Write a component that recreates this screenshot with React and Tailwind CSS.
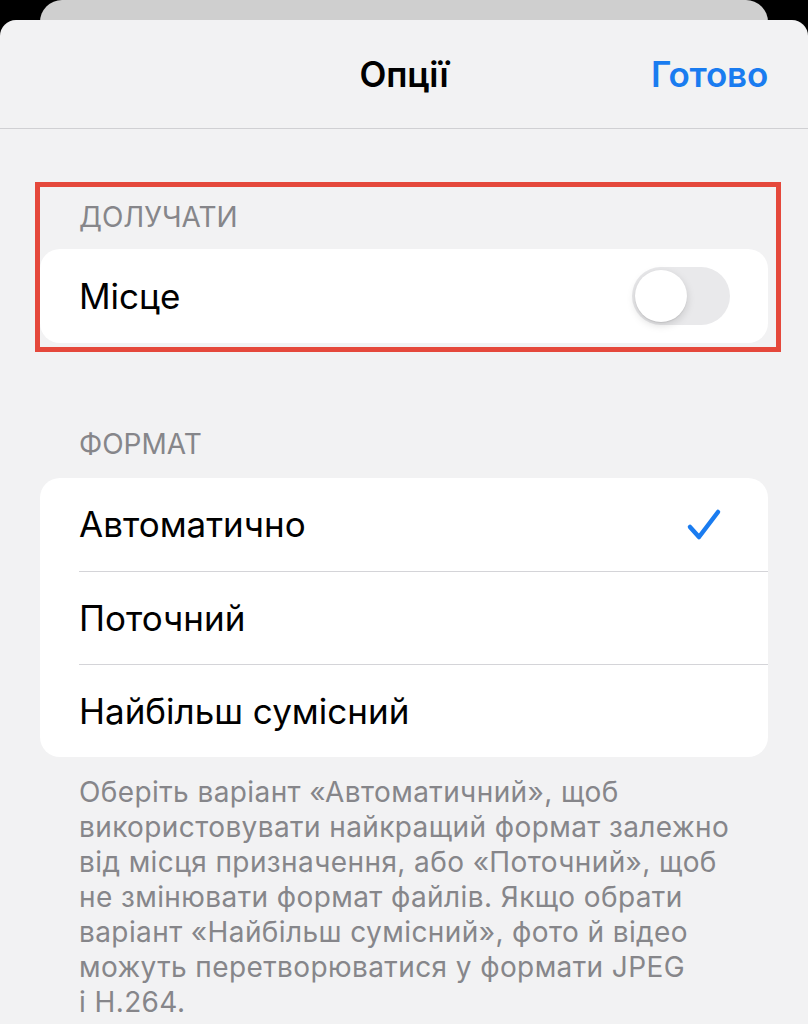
import React, { useState } from "react";

const font = { fontFamily: "Inter, 'Noto Sans', sans-serif" };

const footerLines = [
  "Оберіть варіант «Автоматичний», щоб",
  "використовувати найкращий формат залежно",
  "від місця призначення, або «Поточний», щоб",
  "не змінювати формат файлів. Якщо обрати",
  "варіант «Найбільш сумісний», фото й відео",
  "можуть перетворюватися у формати JPEG",
  "і H.264.",
];

const Toggle = ({ on, onChange }) => (
  <button
    onClick={() => onChange(!on)}
    className={`w-[98px] h-[58px] rounded-full p-[3px] flex items-center ${on ? "bg-[#34c759] justify-end" : "bg-[#e9e9eb] justify-start"}`}
  >
    <span className="w-[52px] h-[52px] rounded-full bg-white shadow-[0_3px_8px_rgba(0,0,0,0.15),0_1px_1px_rgba(0,0,0,0.08)]" />
  </button>
);

const Check = () => (
  <svg width="36" height="34" viewBox="0 0 36 34" fill="none">
    <path d="M4 19 L13 29 L32 4" stroke="#1a7cf0" strokeWidth="4.5" strokeLinecap="round" strokeLinejoin="round" />
  </svg>
);

export default function App() {
  const [location, setLocation] = useState(false);
  const [format, setFormat] = useState(0);
  const formats = ["Автоматично", "Поточний", "Найбільш сумісний"];

  return (
    <div className="w-[808px] h-[1024px] bg-black overflow-hidden flex flex-col" style={font}>
      {/* card behind the sheet */}
      <div className="h-[20px] px-10">
        <div className="h-[40px] bg-[#cfcfcf] rounded-t-[22px]" />
      </div>

      {/* sheet */}
      <div className="relative flex-1 bg-[#f2f2f3] rounded-t-[16px] flex flex-col">
        <div className="h-[109px] grid grid-cols-3 items-center px-10 border-b border-[#d0d0d3]">
          <div />
          <div className="text-center text-[35px] font-semibold text-black tracking-[-0.2px]">Опції</div>
          <div className="text-right text-[35px] font-semibold text-[#1a7cf0] tracking-[-0.2px]">Готово</div>
        </div>

        {/* location section */}
        <div className="relative mt-[72px] px-10">
          <div className="absolute left-[35px] right-[27px] -top-[19px] -bottom-[9px] border-[5px] border-[#e5483b] pointer-events-none" />
          <div className="pl-[39px] text-[28px] leading-[32px] text-[#86868a] uppercase">Долучати</div>
          <div className="mt-4 h-[94px] bg-white rounded-[20px] flex items-center justify-between pl-[39px] pr-[38px]">
            <span className="text-[35px] text-black">Місце</span>
            <Toggle on={location} onChange={setLocation} />
          </div>
        </div>

        {/* format section */}
        <div className="mt-[85px] px-10">
          <div className="pl-[39px] text-[28px] leading-[32px] text-[#86868a] uppercase">Формат</div>
          <div className="mt-[18px] bg-white rounded-[20px] overflow-hidden">
            {formats.map((f, i) => (
              <button
                key={f}
                onClick={() => setFormat(i)}
                className="w-full h-[93px] pl-[39px] flex items-stretch text-left"
              >
                <div className={`flex-1 flex items-center justify-between pr-[46px] ${i > 0 ? "border-t border-[#d4d4d8]" : ""}`}>
                  <span className="text-[35px] text-black">{f}</span>
                  {format === i && <Check />}
                </div>
              </button>
            ))}
          </div>
          <div className="mt-[18px] pl-[39px] flex flex-col text-[28px] leading-[35px] tracking-[0.4px] text-[#86868a]">
            {footerLines.map((line) => (
              <span key={line} className="whitespace-nowrap">{line}</span>
            ))}
          </div>
        </div>
      </div>
    </div>
  );
}
